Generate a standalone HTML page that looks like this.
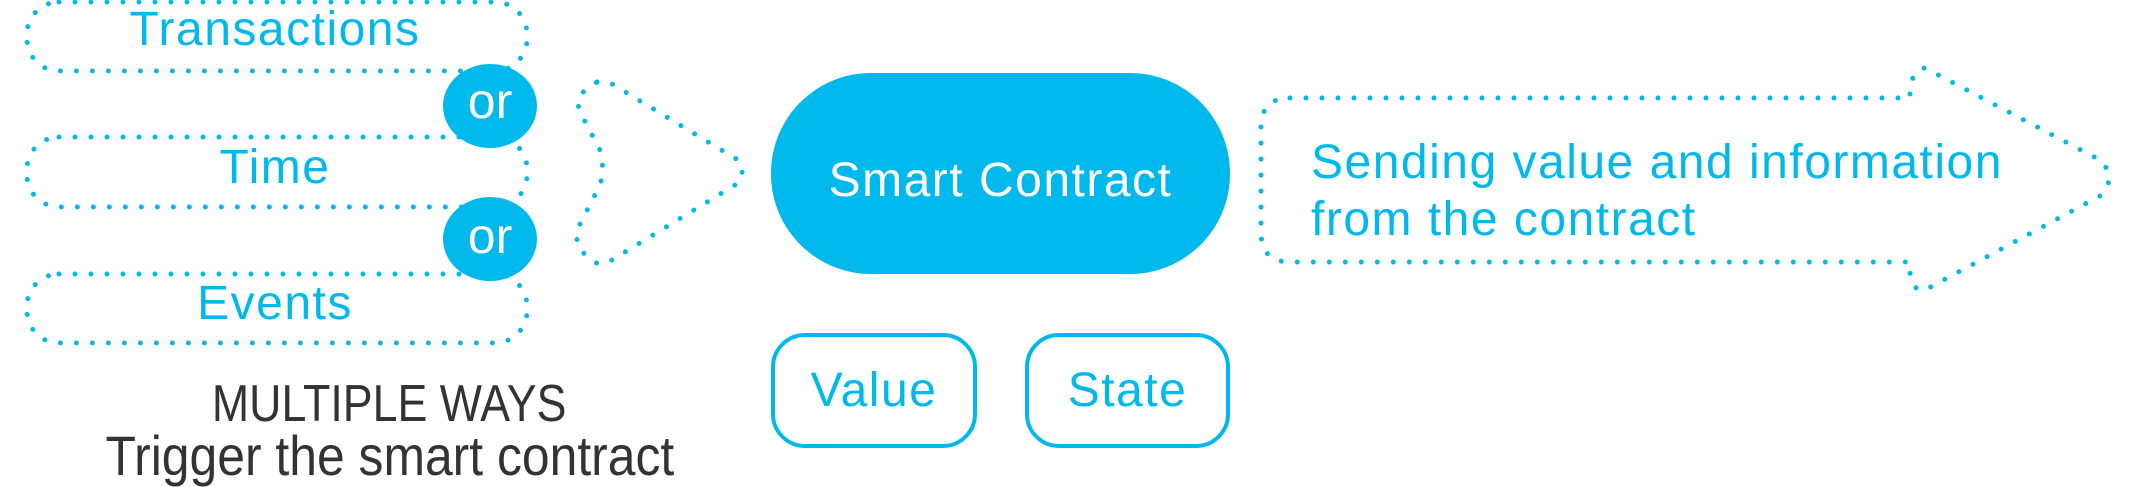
<!DOCTYPE html>
<html><head><meta charset="utf-8"><style>
body{margin:0;width:2130px;height:487px;background:#fff;overflow:hidden;position:relative;font-family:"Liberation Sans",sans-serif}
.t{position:absolute;color:#00b9ec;white-space:nowrap;line-height:1}
</style></head><body>
<svg width="2130" height="487" style="position:absolute;left:0;top:0">
<g fill="none" stroke="#00b9ec" stroke-width="5" stroke-linecap="round" stroke-dasharray="0 16">
<rect x="27" y="2" width="500" height="69" rx="32"/>
<rect x="27" y="137" width="500" height="70" rx="32"/>
<rect x="27" y="274" width="500" height="69" rx="32"/>
<path d="M597 82 Q604 80 612 84 L738 160 Q745 167 740 182 L612 260 Q602 266 594 262 L580 250 Q575 240 578 228 L600 185 Q605 168 600 150 L580 112 Q575 100 585 90 Z"/>
<path d="M1290 98 L1910 98 L1910 90 Q1912 70 1925 68 L2100 160 Q2118 178 2100 196 L1925 290 Q1912 292 1910 272 L1910 262 L1290 262 Q1261 262 1261 232 L1261 128 Q1261 98 1290 98 Z"/>
</g>
<ellipse cx="490" cy="106" rx="47" ry="42" fill="#00b9ec"/>
<ellipse cx="490" cy="239" rx="47" ry="42" fill="#00b9ec"/>
<rect x="771" y="73" width="459" height="201" rx="100" fill="#00b9ec"/>
<rect x="773" y="335" width="202" height="111" rx="32" fill="none" stroke="#00b9ec" stroke-width="4"/>
<rect x="1027" y="335" width="201" height="111" rx="32" fill="none" stroke="#00b9ec" stroke-width="4"/>
</svg>
<div class="t" style="left:0;width:550px;text-align:center;top:6px;font-size:48px;letter-spacing:1.5px">Transactions</div>
<div class="t" style="left:0;width:550px;text-align:center;top:144px;font-size:48px;letter-spacing:1.5px">Time</div>
<div class="t" style="left:0;width:550px;text-align:center;top:280px;font-size:48px;letter-spacing:1.5px">Events</div>
<div class="t" style="left:443px;width:94px;text-align:center;top:76px;font-size:50px;color:#fff">or</div>
<div class="t" style="left:443px;width:94px;text-align:center;top:211px;font-size:50px;color:#fff">or</div>
<div class="t" style="left:771px;width:459px;text-align:center;top:157px;font-size:48px;color:#fff;letter-spacing:1.5px">Smart Contract</div>
<div class="t" style="left:773px;width:202px;text-align:center;top:367px;font-size:48px;letter-spacing:1.5px">Value</div>
<div class="t" style="left:1027px;width:201px;text-align:center;top:367px;font-size:48px;letter-spacing:1.5px">State</div>
<div class="t" style="left:1311px;top:134px;font-size:48px;letter-spacing:1.5px;line-height:57px">Sending value and information<br>from the contract</div>
<div class="t" style="left:0;width:780px;text-align:center;top:378px;font-size:52px;color:#333;transform:scaleX(0.86);transform-origin:384px 0">MULTIPLE WAYS</div>
<div class="t" style="left:0;width:780px;text-align:center;top:428px;font-size:56px;color:#333;transform:scaleX(0.89);transform-origin:389px 0">Trigger the smart contract</div>
</body></html>
